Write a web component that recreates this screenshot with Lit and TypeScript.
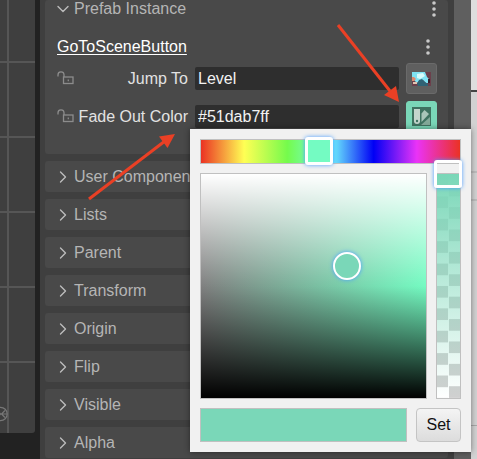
import { LitElement, html, css, svg } from "lit";
import { customElement } from "lit/decorators.js";

const lockIcon = html`<svg class="lock" viewBox="0 0 17 14" width="17" height="14" aria-hidden="true">
  <path d="M1 5.5V4a3 3 0 0 1 6-.3V6" />
  <rect x="6.5" y="6" width="9.5" height="6.5" />
  <path d="M11.3 8.5v1.8" />
</svg>`;

const dotsIcon = html`<svg viewBox="0 0 4 16" width="4" height="16" aria-hidden="true">
  ${[2, 8, 14].map((y) => svg`<circle cx="2" cy=${y} r="1.8" fill="#c9c9c9" />`)}
</svg>`;

const chevron = (d: string) => html`<svg class="chevron" viewBox="0 0 12 12" width="12" height="12" aria-hidden="true">
  <path d=${d} />
</svg>`;

@customElement("color-picker")
export class ColorPicker extends LitElement {
  static styles = css`
    :host {
      display: flex;
      flex-direction: column;
      gap: 9px;
      box-sizing: border-box;
      padding: 10px;
      background: #f1f1f1;
      box-shadow: 0 0 6px rgba(0, 0, 0, 0.45);
      font: 16px/20px "Liberation Sans", Arial, sans-serif;
    }
    .track, .field, .swatch { box-sizing: border-box; border: 1px solid #c0c0c0; }
    .track { position: relative; }
    .hue {
      height: 25px;
      background: linear-gradient(to right, #eb3223, #ffff54, #75fb4c, #73fbfd, #0000f5, #ea33f7, #eb3223);
    }
    .body { display: grid; grid-template-columns: 1fr 25px; gap: 9px; height: 226px; }
    .field {
      position: relative;
      background:
        linear-gradient(to bottom, #fff, rgba(255, 255, 255, 0) 50%),
        linear-gradient(to top, #000, rgba(0, 0, 0, 0) 50%),
        linear-gradient(to right, #808080, rgba(128, 128, 128, 0)),
        #74fbc2;
    }
    .knob {
      position: absolute;
      left: 65%;
      top: 41%;
      width: 28px;
      height: 28px;
      margin: -14px;
      box-sizing: border-box;
      border: 2px solid #fff;
      border-radius: 50%;
      background: #7ad7b8;
      box-shadow: 0 0 4px #4a9cff;
    }
    .alpha {
      background:
        linear-gradient(to bottom, #7ad7b8, rgba(122, 215, 184, 0)),
        repeating-conic-gradient(#fff 0 25%, #d0d0d0 0 50%) 0 0 / 100% 10%;
    }
    input {
      position: absolute;
      margin: 0;
      appearance: none;
      background: none;
      outline: none;
    }
    .hue input { left: 0; top: -3px; width: 100%; height: 28px; }
    .alpha input { left: -3px; top: -14px; width: 28px; height: calc(100% + 28px); writing-mode: vertical-lr; }
    input::-webkit-slider-thumb {
      appearance: none;
      box-sizing: border-box;
      width: 28px;
      height: 28px;
      border: 3px solid #fff;
      border-radius: 3px;
      box-shadow: 0 0 4px #4a9cff;
    }
    .hue input::-webkit-slider-thumb { background: #74fbc2; }
    .foot { display: grid; grid-template-columns: 1fr 45px; gap: 9px; height: 34px; }
    .swatch { background: #7ad7b8; }
    button {
      padding: 0;
      border: 1px solid #c4c4c4;
      border-radius: 4px;
      background: linear-gradient(#f4f4f4, #dcdcdc);
      color: #111;
      font: inherit;
    }
  `;

  render() {
    return html`
      <div class="track hue"><input type="range" aria-label="Hue" min="0" max="360" value="162" /></div>
      <div class="body">
        <div class="field"><div class="knob" role="slider" aria-label="Saturation and lightness" aria-valuenow="65" tabindex="0"></div></div>
        <div class="track alpha"><input type="range" aria-label="Alpha" min="0" max="100" value="0" /></div>
      </div>
      <div class="foot">
        <div class="swatch"></div>
        <button type="button">Set</button>
      </div>
    `;
  }
}

@customElement("app-root")
export class AppRoot extends LitElement {
  private sections = ["User Components", "Lists", "Parent", "Transform", "Origin", "Flip", "Visible", "Alpha"];

  static styles = css`
    :host {
      position: relative;
      display: grid;
      grid-template-columns: 35px minmax(0, 1fr) 17px 6px;
      height: 100vh;
      overflow: hidden;
      background: #222;
      color: #b5b5b5;
      font: 16px/20px "Liberation Sans", Arial, sans-serif;
    }
    .canvas {
      margin-bottom: 26px;
      border-radius: 0 0 3px 0;
      overflow: hidden;
      background:
        linear-gradient(#565656, #565656) 7px 0 / 2px 100% no-repeat,
        linear-gradient(#565656 2px, transparent 2px) 0 61px / 100% 75px,
        #3f3f3f;
      display: flex;
      align-items: flex-end;
    }
    .origin { flex: none; margin: 0 0 11px -7px; }
    .inspector {
      margin-left: 5px;
      padding: 0 6px 0 5px;
      background: #3f3f3f;
      display: flex;
      flex-direction: column;
      gap: 7px;
    }
    .card { flex: none; border-radius: 3px; background: #494949; }
    .section {
      display: flex;
      align-items: center;
      gap: 5px;
      height: 31px;
      padding: 1px 12px 0;
      border: 0;
      color: inherit;
      font: inherit;
      text-align: left;
    }
    .chevron { flex: none; fill: none; stroke: #bcbcbc; stroke-width: 1.4; stroke-linecap: round; stroke-linejoin: round; }
    .prefab { padding: 0 11px 22px 12px; }
    .head, .title { display: flex; align-items: center; justify-content: space-between; }
    .head { height: 17px; margin: 0 -1px 20px 0; }
    .title { height: 20px; padding-right: 7px; margin-bottom: 6px; }
    .title a { color: #fff; text-underline-offset: 2px; }
    .fold, .more {
      display: flex;
      align-items: center;
      padding: 0;
      border: 0;
      background: none;
      color: inherit;
      font: inherit;
    }
    .fold { gap: 5px; }
    .head .more { margin-right: 2px; }
    .props { display: grid; gap: 7px; }
    .prop { display: grid; grid-template-columns: 18px 106px 1fr 31px; gap: 0 7px; align-items: center; height: 31px; }
    .prop .lock { margin-bottom: 1px; }
    .prop label { margin-left: -7px; color: #e2e2e2; text-align: right; white-space: nowrap; }
    .prop input {
      min-width: 0;
      box-sizing: border-box;
      height: 23px;
      padding: 0 3px;
      border: 0;
      border-radius: 2px;
      background: #2e2e2e;
      color: #f2f2f2;
      font: inherit;
    }
    .pick {
      display: grid;
      place-items: center;
      height: 31px;
      padding: 0;
      border: 1px solid #6a6a6a;
      border-radius: 3px;
      background: #5f5f5f;
    }
    .pick.color { border-color: #7ad7b8; background: #7ad7b8; }
    .lock { fill: none; stroke: #8c8c8c; stroke-width: 1.3; }
    .gutter { background: #5f5f5f; }
    .page {
      background:
        linear-gradient(#444, #444) 0 90px / 100% 2px no-repeat,
        linear-gradient(#bdbdbd, #bdbdbd) 0 171px / 100% 2px no-repeat,
        linear-gradient(#bdbdbd, #bdbdbd) 0 199px / 100% 2px no-repeat,
        linear-gradient(#a8a8a8, #a8a8a8) 0 425px / 100% 1px no-repeat,
        linear-gradient(#dedede 90px, #d2d2d2 92px);
    }
    color-picker { position: absolute; top: 129px; right: 6px; width: 281px; }
    .arrow { position: absolute; fill: #ea4025; stroke: #ea4025; pointer-events: none; }
    .to-button { top: 20px; right: 76px; }
    .to-field { top: 130px; left: 85px; }
  `;

  render() {
    return html`
      <div class="canvas">
        <svg class="origin" width="15" height="16" viewBox="0 0 15 16" fill="none" stroke="#777" stroke-width="1.2" aria-hidden="true">
          <circle cx="7.5" cy="8" r="6.7" />
          <path d="M7 8h7M12 4.500 8.500 8l3.500 3.500M4 4l3.500 4L4 12" />
        </svg>
      </div>
      <main class="inspector">
        <section class="card prefab">
          <div class="head">
            <button class="fold" type="button">${chevron("M1 3.500l5 5 5-5")}Prefab Instance</button>
            <button class="more" type="button" aria-label="Prefab menu">${dotsIcon}</button>
          </div>
          <div class="title">
            <a href="#">GoToSceneButton</a>
            <button class="more" type="button" aria-label="Component menu">${dotsIcon}</button>
          </div>
          <div class="props">
            <div class="prop">
              ${lockIcon}
              <label for="jump">Jump To</label>
              <input id="jump" type="text" value="Level" />
              <button class="pick" type="button" aria-label="Choose scene">
                <svg width="19" height="14" viewBox="0 0 19 14" aria-hidden="true">
                  <path fill="#6b3f4b" d="M0 0h19v14H0z" />
                  <path fill="#7fe3f3" d="M0 0h13l2 5 3 3v3h-4l-3-3-4 1-2 2-3-3-2-2z" />
                  <path fill="#d6fbfb" d="M5 2l6-1 2 3-5 3-3-1z" />
                  <path fill="#dd8b70" d="M0 5h2l2 2-2 2H0z" />
                  <path fill="#2f6274" d="M5 12l2-4 3-1 3 3 3 2v2H6z" />
                  <path fill="#e3c3b0" d="M1 10h4v2H1z" />
                  <path fill="#351f2d" d="M16 7h2v4h-2z" />
                </svg>
              </button>
            </div>
            <div class="prop">
              ${lockIcon}
              <label for="fade">Fade Out Color</label>
              <input id="fade" type="text" value="#51dab7ff" />
              <button class="pick color" type="button" aria-label="Choose color">
                <svg width="19" height="19" viewBox="0 0 19 19" aria-hidden="true">
                  <path fill="#3f7260" d="M0 0h19v19H0z" />
                  <path fill="#c4d5cd" d="M2 2h6v12a3 3 0 0 1-6 0z" />
                  <circle cx="5" cy="14" r="1.200" fill="#3f7260" />
                  <path fill="#a9c5b9" d="M9.500 6.500 12.500 3l4.500 4-7.500 8z" />
                  <path fill="#83a999" d="M18 10v8H9z" />
                </svg>
              </button>
            </div>
          </div>
        </section>
        ${this.sections.map(
          (name) => html`<button class="card section" type="button">${chevron("M3.500 1l5 5-5 5")}${name}</button>`
        )}
      </main>
      <div class="gutter"></div>
      <div class="page"></div>
      <color-picker></color-picker>
      <svg class="arrow to-button" width="66" height="84" viewBox="0 0 66 84" aria-hidden="true">
        <path d="M3 5 55 71" fill="none" stroke-width="3" />
        <path d="M64 82 49 75 61 66z" stroke="none" />
      </svg>
      <svg class="arrow to-field" width="94" height="74" viewBox="0 0 94 74" aria-hidden="true">
        <path d="M4 69 80 11" fill="none" stroke-width="3" />
        <path d="M90 4 74 6.500 82.500 18z" stroke="none" />
      </svg>
    `;
  }
}
